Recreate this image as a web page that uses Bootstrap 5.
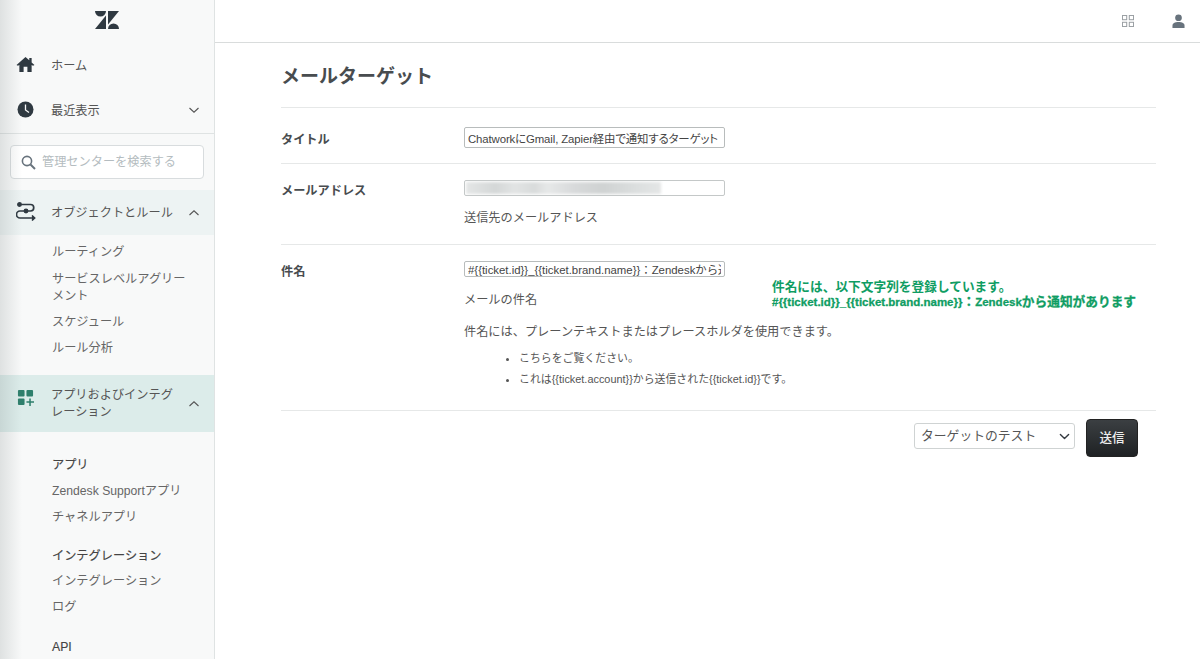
<!DOCTYPE html>
<html lang="ja">
<head>
<meta charset="utf-8">
<title>メールターゲット</title>
<link href="https://cdn.jsdelivr.net/npm/bootstrap@5.3.0/dist/css/bootstrap.min.css" rel="stylesheet">
<style>
html,body{height:100%;overflow:hidden}
body{font-family:"Liberation Sans","Noto Sans CJK JP",sans-serif;color:#555;background:#fff;font-size:12.2px}
.shell{height:659px;overflow:hidden}
.side{width:215px;flex:none;height:659px;overflow:hidden;background:#f8f9f9;border-right:1px solid #dfe3e3;position:relative;color:#555}
.side::before{content:"";position:absolute;left:0;top:0;bottom:0;width:22px;background:linear-gradient(90deg,rgba(120,130,130,.2),rgba(120,130,130,0));pointer-events:none;z-index:2}
.logo-row{height:42px;padding-bottom:2px}
.navrow{height:45px;padding:0 14px 0 16px;font-size:12.2px}
.navico{width:35px;flex:none;display:flex}
.navico.nudge{padding-left:1px}
.navlabel{flex:1;line-height:17px;padding-top:3px}
.sec1 .navlabel,.sec2 .navlabel{padding-top:1px}
.sec2 .navlabel.wrapnarrow{padding-right:10px}
.side-rule{border-top:1px solid #dfe3e3;margin-top:1px}
.searchwrap{padding:11px 10px 11px}
.searchbox{height:34px;border:1px solid #d8dcde;border-radius:4px;background:#fff;color:#b4bcc0;font-size:12.2px;padding-left:10px;gap:6px}
.sec1{background:#edf3f3}
.sec2{background:#dcecea;height:57px}
.appico{align-self:flex-start;margin-top:14px}
.sublist{padding:4px 26px 0 52px;font-size:12.2px;color:#666;margin:0;list-style:none}
.sublist li{line-height:17px;padding:4.5px 0}
.sublist.s1{height:140px}
.sublist.s1 li:nth-child(2){margin-top:1px}
.sublist.s2{padding-top:20px}
.sublist .gap-top{margin-top:13px}
.sublist .gap-more{margin-top:14px}
.sublist .hd{color:#444;-webkit-text-stroke:.15px #444}
.sublist .tight{margin-bottom:-1px}
.topbar{height:43px;border-bottom:1px solid #d9dcdc;padding-right:15px;gap:38px}
.mainpane{flex:1;min-width:0;position:relative}
.formwrap{width:875px;margin-left:66px}
.pagehead{height:64px;font-size:19px;font-weight:700;color:#484c4f;margin:0;line-height:68px}
.frow{border-top:1px solid #e6e8e8;padding-top:16px}
.flabel{width:183px;flex:none;font-weight:700;font-size:12.2px;color:#484c4f;line-height:18px;padding-top:2px}
.r1{height:56px;padding-top:19px}
.r2{height:81px}
.r3{height:166px}
.r1 .flabel{padding-top:4px}
.txtin{width:261px;height:21px;padding:0 3px;font-size:11.4px;line-height:19px;border:1px solid #b8bcbc;border-radius:2px;color:#444;font-family:inherit;min-height:0}
.txtin.paltin{font-feature-settings:"palt";letter-spacing:-.12px}
.txtin.thin{height:16px;line-height:14px}
.blurbox{width:261px;height:16px;border:1px solid #c4c8c8;border-radius:2px;background:#fff;overflow:hidden;padding:1px}
.blurfill{width:195px;height:100%;background:linear-gradient(90deg,#e4e6e6,#d4d7d7 15%,#e2e4e4 25%,#d8dbdb 35%,#e6e8e8 42%,#d8dadb 55%,#cfd2d2 70%,#dcdfdf 88%,#e4e6e6);filter:blur(1.5px)}
.helpline{margin:0;line-height:18px}
.mt-h{margin-top:13px}
.r3 .mt-h{margin-top:14px}
.mt-p{margin-top:14px}
.bulletlist{margin:7px 0 0;padding-left:55px;font-size:10.9px;color:#555;line-height:21px}
.actionrow{border-top:1px solid #e6e8e8;padding:8px 18px 0 0;gap:11px}
.selecttest{width:161px;height:26px;padding:0 6px;font-size:12.8px;color:#555;border:1px solid #cfd3d3;border-radius:3px;font-family:inherit;background-position:right 4px center;background-size:11px;min-height:0}
.sendbtn{width:52px;height:38px;padding:0;font-size:12.6px;background:linear-gradient(#3b3f42,#1f2224);border:1px solid #222;border-radius:4px;color:#eee;font-weight:500}
.noteblock{position:absolute;left:557px;top:280px;color:#0f9d63;font-size:12.7px;font-weight:700;line-height:15px;white-space:nowrap}
.noteline2{-webkit-text-stroke:.3px #0f9d63}
.notelatin{font-size:11.5px}
</style>
</head>
<body>
<div class="shell d-flex">
  <aside class="side">
    <div class="logo-row d-flex align-items-center justify-content-center">
      <svg width="24" height="18" viewBox="0 0 24 18" fill="#2f3941"><path d="M0 0H11A5.5 5.5 0 0 1 0 0Z"/><path d="M13 13.5V0H24Z"/><path d="M11 4.5V18H0Z"/><path d="M13 18A5.5 5.5 0 0 1 24 18Z"/></svg>
    </div>
    <div class="navrow d-flex align-items-center">
      <span class="navico"><svg width="19" height="17" viewBox="0 0 20 18" fill="#2f3941"><path d="M10 1 0.5 9.6 2 10.4 3.5 9.6V17H8V11.5H12V17H16.5V9.6L18 10.4 19.5 9.6 16.5 6.8V2H14V4.6Z"/></svg></span>
      <span class="navlabel">ホーム</span>
    </div>
    <div class="navrow d-flex align-items-center">
      <span class="navico nudge"><svg width="17" height="17" viewBox="0 0 17 17"><circle cx="8.5" cy="8.5" r="8" fill="#2f3941"/><path d="M8.5 3.5V9L12 11.5" fill="none" stroke="#f8f9f9" stroke-width="1.3"/></svg></span>
      <span class="navlabel">最近表示</span>
      <svg width="12" height="12" viewBox="0 0 12 12" fill="none" stroke="#555" stroke-width="1.1"><path d="M1.5 4 6 8.2 10.5 4"/></svg>
    </div>
    <div class="side-rule"></div>
    <div class="searchwrap">
      <div class="searchbox d-flex align-items-center">
        <svg width="15" height="15" viewBox="0 0 15 15" fill="none" stroke="#68737d" stroke-width="1.6"><circle cx="6" cy="6" r="4.6"/><path d="M9.5 9.5 14 14" stroke-width="2"/></svg>
        <span>管理センターを検索する</span>
      </div>
    </div>
    <div class="navrow sec1 d-flex align-items-center">
      <span class="navico"><svg width="20" height="21" viewBox="0 0 20 21" fill="none" stroke="#2f3941" stroke-width="1.7"><circle cx="3.5" cy="2.5" r="1.6" fill="#2f3941"/><path d="M5 2.5H14.5A3.2 3.2 0 0 1 14.5 9H4A3.2 3.2 0 0 0 4 16H17"/><circle cx="10" cy="9" r="1.6" fill="#2f3941"/><path d="M16 13.5 18.6 16 16 18.5" fill="#2f3941"/></svg></span>
      <span class="navlabel">オブジェクトとルール</span>
      <svg width="12" height="12" viewBox="0 0 12 12" fill="none" stroke="#555" stroke-width="1.1"><path d="M1.5 8 6 3.8 10.5 8"/></svg>
    </div>
    <ul class="sublist s1">
      <li>ルーティング</li>
      <li>サービスレベルアグリーメント</li>
      <li>スケジュール</li>
      <li>ルール分析</li>
    </ul>
    <div class="navrow sec2 d-flex align-items-center">
      <span class="navico nudge appico"><svg width="17" height="17" viewBox="0 0 18 18" fill="#2e7f6c"><rect x="1" y="1" width="7" height="7" rx="1"/><rect x="10" y="1" width="7" height="7" rx="1"/><rect x="1" y="10" width="7" height="7" rx="1"/><path d="M13 10h1.6v3H18v1.6h-3.4V18H13v-3.4H10V13h3Z"/></svg></span>
      <span class="navlabel wrapnarrow">アプリおよびインテグレーション</span>
      <svg width="12" height="12" viewBox="0 0 12 12" fill="none" stroke="#555" stroke-width="1.1"><path d="M1.5 8 6 3.8 10.5 8"/></svg>
    </div>
    <ul class="sublist s2">
      <li class="hd">アプリ</li>
      <li>Zendesk Supportアプリ</li>
      <li>チャネルアプリ</li>
      <li class="hd gap-top tight">インテグレーション</li>
      <li>インテグレーション</li>
      <li>ログ</li>
      <li class="hd gap-more">API</li>
    </ul>
  </aside>
  <main class="mainpane">
    <div class="topbar d-flex align-items-center justify-content-end">
      <svg width="12" height="12" viewBox="0 0 13 13" fill="none" stroke="#9a9fa3" stroke-width="1.1"><rect x=".5" y=".5" width="4.6" height="4.6"/><rect x="7.9" y=".5" width="4.6" height="4.6"/><rect x=".5" y="7.9" width="4.6" height="4.6"/><rect x="7.9" y="7.9" width="4.6" height="4.6"/></svg>
      <svg width="13" height="14" viewBox="0 0 14 15" fill="#68737d"><circle cx="7" cy="4" r="3.6"/><path d="M0.5 15V12.5C.5 10 3 8.6 7 8.6S13.5 10 13.5 12.5V15Z"/></svg>
    </div>
    <div class="formwrap">
      <h1 class="pagehead">メールターゲット</h1>
      <div class="frow r1 d-flex">
        <div class="flabel">タイトル</div>
        <div><input class="form-control txtin paltin" type="text" value="ChatworkにGmail, Zapier経由で通知するターゲット" aria-label="タイトル"></div>
      </div>
      <div class="frow r2 d-flex">
        <div class="flabel">メールアドレス</div>
        <div>
          <div class="blurbox"><div class="blurfill"></div></div>
          <p class="helpline mt-h">送信先のメールアドレス</p>
        </div>
      </div>
      <div class="frow r3 d-flex">
        <div class="flabel">件名</div>
        <div>
          <input class="form-control txtin thin" type="text" value="#{{ticket.id}}_{{ticket.brand.name}}：Zendeskから通知があります" aria-label="件名">
          <p class="helpline mt-h">メールの件名</p>
          <p class="helpline mt-p">件名には、プレーンテキストまたはプレースホルダを使用できます。</p>
          <ul class="bulletlist">
            <li>こちらをご覧ください。</li>
            <li>これは{{ticket.account}}から送信された{{ticket.id}}です。</li>
          </ul>
        </div>
      </div>
      <div class="actionrow d-flex justify-content-end align-items-start">
        <select class="form-select selecttest mt-1" aria-label="ターゲットのテスト"><option>ターゲットのテスト</option></select>
        <button class="btn sendbtn" type="button">送信</button>
      </div>
    </div>
    <div class="noteblock">
      <div>件名には、以下文字列を登録しています。</div>
      <div class="noteline2"><span class="notelatin">#{{ticket.id}}_{{ticket.brand.name}}</span>：<span class="notelatin">Zendesk</span>から通知があります</div>
    </div>
  </main>
</div>
<script src="https://cdn.jsdelivr.net/npm/bootstrap@5.3.0/dist/js/bootstrap.bundle.min.js"></script>
</body>
</html>
